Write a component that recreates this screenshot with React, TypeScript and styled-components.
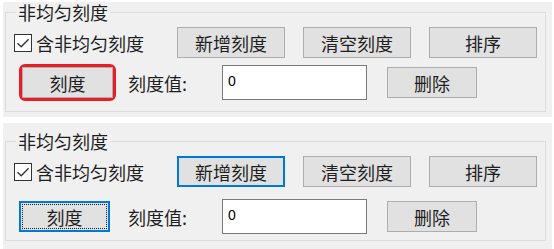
import React from 'react';
import styled, { createGlobalStyle, css } from 'styled-components';

const GlobalStyle = createGlobalStyle`
  html, body {
    margin: 0;
    padding: 0;
    background: #ffffff;
  }
  body {
    font-family: "Noto Sans CJK SC", "Noto Sans", sans-serif;
    color: #1e1e1e;
  }
`;

const SPage = styled.div`
  display: flex;
  flex-direction: column;
  gap: 6px;
  padding: 2px 2px 0 3px;
  width: 549px;
`;

const SPanel = styled.div<{ $top: number; $height: number }>`
  background: #f0f0f0;
  height: ${(p) => p.$height}px;
  padding: ${(p) => p.$top}px 6px 0 2px;
  box-sizing: border-box;
`;

const SGroup = styled.fieldset`
  margin: 0;
  padding: 0;
  border: 1px solid #dcdcdc;
  height: 110px;
  box-sizing: border-box;
  min-width: 0;
`;

const SLegend = styled.legend`
  margin-left: 10px;
  padding: 0 2px;
  font-size: 18px;
  line-height: 20px;
`;

const SRow = styled.div<{ $mt: number; $ml: number }>`
  display: flex;
  align-items: center;
  margin-top: ${(p) => p.$mt}px;
  padding-left: ${(p) => p.$ml}px;
`;

const SCheckLabel = styled.label`
  display: flex;
  align-items: center;
  gap: 4px;
  width: 163px;
  font-size: 18px;
  line-height: 20px;
`;

const SButton = styled.button<{ $w: number; $focus?: boolean; $dotted?: boolean }>`
  box-sizing: border-box;
  width: ${(p) => p.$w}px;
  height: 31px;
  margin: 0;
  padding: 0;
  background: #e1e1e1;
  border: 1px solid #adadad;
  border-radius: 0;
  font-family: inherit;
  font-size: 18px;
  line-height: 20px;
  color: #1e1e1e;
  position: relative;
  ${(p) =>
    p.$focus &&
    css`
      border: 2px solid #0078d7;
    `}
  ${(p) =>
    p.$dotted &&
    css`
      &::after {
        content: '';
        position: absolute;
        inset: 1px;
        border: 1px dotted #1e1e1e;
      }
    `}
`;

const SButtonGroup = styled.div`
  display: flex;
  gap: 18px;
`;

const SRedMark = styled.span`
  display: inline-flex;
  border: 3px solid #ec1c24;
  border-radius: 6px;
`;

const SFieldLabel = styled.span<{ $ml: number }>`
  margin-left: ${(p) => p.$ml}px;
  width: 94px;
  font-size: 18px;
  line-height: 20px;
`;

const SInput = styled.input`
  box-sizing: border-box;
  width: 145px;
  height: 35px;
  margin: 0;
  padding: 0 0 4px 5px;
  border: 1px solid #7a7a7a;
  background: #ffffff;
  font-family: "Liberation Sans", Arial, sans-serif;
  font-size: 14px;
  color: #000;
  outline: none;
`;

const SDelete = styled(SButton)`
  margin-left: 20px;
`;

const CheckBox: React.FC = () => (
  <svg width="18" height="18" viewBox="0 0 18 18">
    <rect x="0.5" y="0.5" width="17" height="17" fill="#ffffff" stroke="#333333" />
    <path d="M3.5 9.2 L7.2 12.8 L14.6 5.2" fill="none" stroke="#333333" strokeWidth="1.3" />
  </svg>
);

interface ScaleGroupProps {
  variant: 'marked' | 'focused';
}

const ScaleGroup: React.FC<ScaleGroupProps> = ({ variant }) => {
  const marked = variant === 'marked';
  const scaleButton = marked ? (
    <SRedMark>
      <SButton $w={91} type="button">刻度</SButton>
    </SRedMark>
  ) : (
    <SButton $w={91} $focus $dotted type="button">刻度</SButton>
  );

  return (
    <SGroup>
      <SLegend>非均匀刻度</SLegend>
      <SRow $mt={5} $ml={8}>
        <SCheckLabel>
          <CheckBox />
          含非均匀刻度
        </SCheckLabel>
        <SButtonGroup>
          <SButton $w={108} $focus={!marked} type="button">新增刻度</SButton>
          <SButton $w={108} type="button">清空刻度</SButton>
          <SButton $w={108} type="button">排序</SButton>
        </SButtonGroup>
      </SRow>
      <SRow $mt={marked ? 6 : 12} $ml={13}>
        {scaleButton}
        <SFieldLabel $ml={marked ? 12 : 18}>刻度值:</SFieldLabel>
        <SInput defaultValue="0" />
        <SDelete $w={90} type="button">删除</SDelete>
      </SRow>
    </SGroup>
  );
};

const App: React.FC = () => (
  <>
    <GlobalStyle />
    <SPage>
      <SPanel $top={0} $height={115}>
        <ScaleGroup variant="marked" />
      </SPanel>
      <SPanel $top={8} $height={127}>
        <ScaleGroup variant="focused" />
      </SPanel>
    </SPage>
  </>
);

export default App;
